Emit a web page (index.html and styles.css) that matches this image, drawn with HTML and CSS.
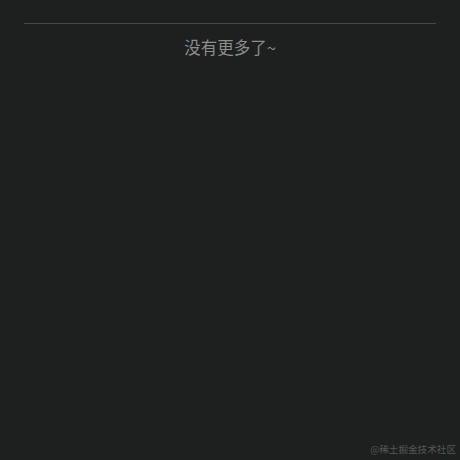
FILE: index.html
```html
<!DOCTYPE html>
<html lang="zh">
<head>
<meta charset="utf-8">
<link rel="stylesheet" href="styles.css">
</head>
<body>
<div class="page">
  <div class="divider"></div>
  <div class="end-text">没有更多了~</div>
</div>
<div class="watermark">@稀土掘金技术社区</div>
</body>
</html>
```
FILE: styles.css
```css
html, body {
  margin: 0;
  padding: 0;
  height: 100%;
  background: #1e201f;
}
body {
  font-family: "Noto Sans CJK SC", "Noto Sans", sans-serif;
  position: relative;
  overflow: hidden;
}
.page {
  padding: 23px 24px 0;
}
.divider {
  height: 1px;
  background: #474948;
}
.end-text {
  margin-top: 11px;
  text-align: center;
  font-size: 16.5px;
  line-height: 24px;
  color: #8c8d8d;
}
.watermark {
  position: absolute;
  right: 4px;
  bottom: 4px;
  font-size: 9.6px;
  line-height: 13px;
  color: #555756;
}
```
